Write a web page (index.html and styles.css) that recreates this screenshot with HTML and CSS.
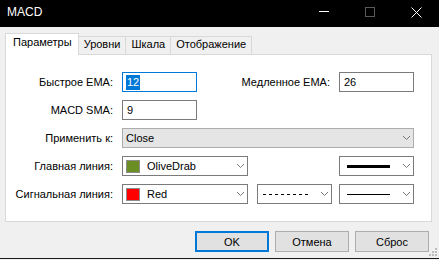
FILE: index.html
```html
<!DOCTYPE html>
<html lang="ru">
<head>
    <meta charset="UTF-8" />
    <title>MACD</title>
    <link rel="stylesheet" href="styles.css">
</head>
<body>
    <div class="window">
        <header class="titlebar">
            <span class="title">MACD</span>
            <div class="caption-buttons">
                <span class="caption-btn">
                    <svg width="10" height="10" viewBox="0 0 10 10"><line x1="0" y1="4.5" x2="10" y2="4.5" stroke="#fff" stroke-width="1"/></svg>
                </span>
                <span class="caption-btn">
                    <svg width="10" height="10" viewBox="0 0 10 10"><rect x="0.5" y="0.5" width="9" height="9" fill="none" stroke="#5a5a5a" stroke-width="1"/></svg>
                </span>
                <span class="caption-btn">
                    <svg width="11" height="11" viewBox="0 0 11 11"><path d="M0.5 0.5 L10.5 10.5 M10.5 0.5 L0.5 10.5" stroke="#fff" stroke-width="1"/></svg>
                </span>
            </div>
        </header>

        <div class="dialog">
            <nav class="tabs">
                <span class="tab active">Параметры</span>
                <span class="tab">Уровни</span>
                <span class="tab">Шкала</span>
                <span class="tab">Отображение</span>
            </nav>

            <section class="panel">
                <label class="label">Быстрое EMA:</label>
                <div class="field focused"><span class="selected">12</span></div>
                <label class="label col-3">Медленное EMA:</label>
                <div class="field">26</div>

                <label class="label">MACD SMA:</label>
                <div class="field">9</div>

                <label class="label">Применить к:</label>
                <div class="combo flat span-all">
                    <span>Close</span>
                    <svg class="chevron" width="7" height="4" viewBox="0 0 7 4"><polyline points="0,0 3.5,3.5 7,0" fill="none" stroke="#777" stroke-width="1"/></svg>
                </div>

                <label class="label">Главная линия:</label>
                <div class="combo wide">
                    <span class="swatch olive"></span>
                    <span>OliveDrab</span>
                    <svg class="chevron" width="7" height="4" viewBox="0 0 7 4"><polyline points="0,0 3.5,3.5 7,0" fill="none" stroke="#777" stroke-width="1"/></svg>
                </div>
                <div class="combo col-4">
                    <svg class="line-sample" width="43" height="3" viewBox="0 0 43 3"><line x1="0" y1="1.5" x2="43" y2="1.5" stroke="#000" stroke-width="3"/></svg>
                    <svg class="chevron" width="7" height="4" viewBox="0 0 7 4"><polyline points="0,0 3.5,3.5 7,0" fill="none" stroke="#777" stroke-width="1"/></svg>
                </div>

                <label class="label">Сигнальная линия:</label>
                <div class="combo wide">
                    <span class="swatch red"></span>
                    <span>Red</span>
                    <svg class="chevron" width="7" height="4" viewBox="0 0 7 4"><polyline points="0,0 3.5,3.5 7,0" fill="none" stroke="#777" stroke-width="1"/></svg>
                </div>
                <div class="combo">
                    <svg class="dash-sample" width="45" height="1" viewBox="0 0 45 1"><line x1="0" y1="0.5" x2="45" y2="0.5" stroke="#000" stroke-width="1" stroke-dasharray="3 3"/></svg>
                    <svg class="chevron" width="7" height="4" viewBox="0 0 7 4"><polyline points="0,0 3.5,3.5 7,0" fill="none" stroke="#777" stroke-width="1"/></svg>
                </div>
                <div class="combo">
                    <svg class="line-sample" width="43" height="1" viewBox="0 0 43 1"><line x1="0" y1="0.5" x2="43" y2="0.5" stroke="#000" stroke-width="1"/></svg>
                    <svg class="chevron" width="7" height="4" viewBox="0 0 7 4"><polyline points="0,0 3.5,3.5 7,0" fill="none" stroke="#777" stroke-width="1"/></svg>
                </div>
            </section>

            <footer class="buttons">
                <button class="btn default">OK</button>
                <button class="btn">Отмена</button>
                <button class="btn">Сброс</button>
            </footer>
        </div>

        <svg class="grip" width="8" height="8" viewBox="0 0 8 8">
            <rect x="6" y="0" width="2" height="2" fill="#bcbcbc"/>
            <rect x="3" y="3" width="2" height="2" fill="#bcbcbc"/>
            <rect x="6" y="3" width="2" height="2" fill="#bcbcbc"/>
            <rect x="0" y="6" width="2" height="2" fill="#bcbcbc"/>
            <rect x="3" y="6" width="2" height="2" fill="#bcbcbc"/>
            <rect x="6" y="6" width="2" height="2" fill="#bcbcbc"/>
        </svg>
    </div>
</body>
</html>
```

FILE: styles.css
```css
* {
    margin: 0;
    padding: 0;
    box-sizing: border-box;
}

body {
    background-color: #f0f0f0;
    font-family: "Liberation Sans", Arial, sans-serif;
    font-size: 11px;
    color: #000;
}

.window {
    position: relative;
    width: 439px;
    height: 259px;
    border-bottom: 1px solid #1a1a1a;
}

/* title bar */
.titlebar {
    display: flex;
    height: 27px;
    background: #000;
    color: #fff;
}

.title {
    padding: 5px 0 0 7px;
    font-size: 12px;
    line-height: 14px;
}

.caption-buttons {
    display: flex;
    margin-left: auto;
}

.caption-btn {
    display: flex;
    justify-content: center;
    width: 46px;
    padding-top: 7px;
}

/* tabs + panel */
.dialog {
    padding: 6px 7px 0 5px;
}

.tabs {
    display: flex;
    align-items: flex-end;
    height: 22px;
    margin-bottom: -1px;
    position: relative;
    z-index: 1;
}

.tab {
    height: 18px;
    margin-bottom: 1px;
    padding: 0 5px;
    line-height: 15px;
    border: 1px solid #d9d9d9;
    border-bottom: none;
    border-left: none;
    background: #f0f0f0;
}

.tab.active {
    height: 22px;
    margin-bottom: 0;
    padding: 0 6px 0 7px;
    line-height: 17px;
    border-left: 1px solid #d9d9d9;
    background: #fff;
}

.panel {
    display: grid;
    grid-template-columns: 109px 128px 75px 75px;
    grid-auto-rows: 20px;
    column-gap: 7px;
    row-gap: 8px;
    align-content: start;
    height: 168px;
    padding-top: 17px;
    background: #fff;
    border: 1px solid #d9d9d9;
}

.label {
    grid-column: 1;
    align-self: center;
    justify-self: end;
    padding-right: 2px;
    white-space: nowrap;
}

.label.col-3 {
    grid-column: 3;
}

.field {
    display: flex;
    align-items: center;
    width: 75px;
    padding-left: 4px;
    border: 1px solid #7a7a7a;
    background: #fff;
}

.field.focused {
    border-color: #0078d7;
}

.selected {
    display: inline-block;
    line-height: 15px;
    padding: 0 1px;
    margin-left: -1px;
    background: #0078d7;
    color: #fff;
}

.combo {
    display: flex;
    align-items: center;
    width: 75px;
    padding-left: 3px;
    border: 1px solid #7a7a7a;
    background: #fff;
}

.combo.wide {
    width: 126px;
}

.combo.flat {
    background: #e5e5e5;
    border-color: #adadad;
}

.span-all {
    grid-column: 2 / 5;
    width: auto;
}

.col-4 {
    grid-column: 4;
}

.chevron {
    margin-left: auto;
    margin-right: 3px;
}

.swatch {
    width: 14px;
    height: 13px;
    margin: 0 7px 0 0;
    border: 1px solid #8c8c8c;
}

.swatch.olive { background: #6b8e23; }
.swatch.red { background: #ff0000; }

.line-sample {
    margin-left: 4px;
}

.dash-sample {
    margin-left: 2px;
}

/* bottom buttons */
.buttons {
    display: flex;
    justify-content: flex-end;
    gap: 6px;
    padding: 9px 3px 0 0;
}

.btn {
    width: 74px;
    height: 21px;
    font-family: inherit;
    font-size: 11px;
    background: #e1e1e1;
    border: 1px solid #adadad;
}

.btn.default {
    border: 2px solid #0078d7;
}

.grip {
    position: absolute;
    right: 2px;
    bottom: 2px;
}
```
